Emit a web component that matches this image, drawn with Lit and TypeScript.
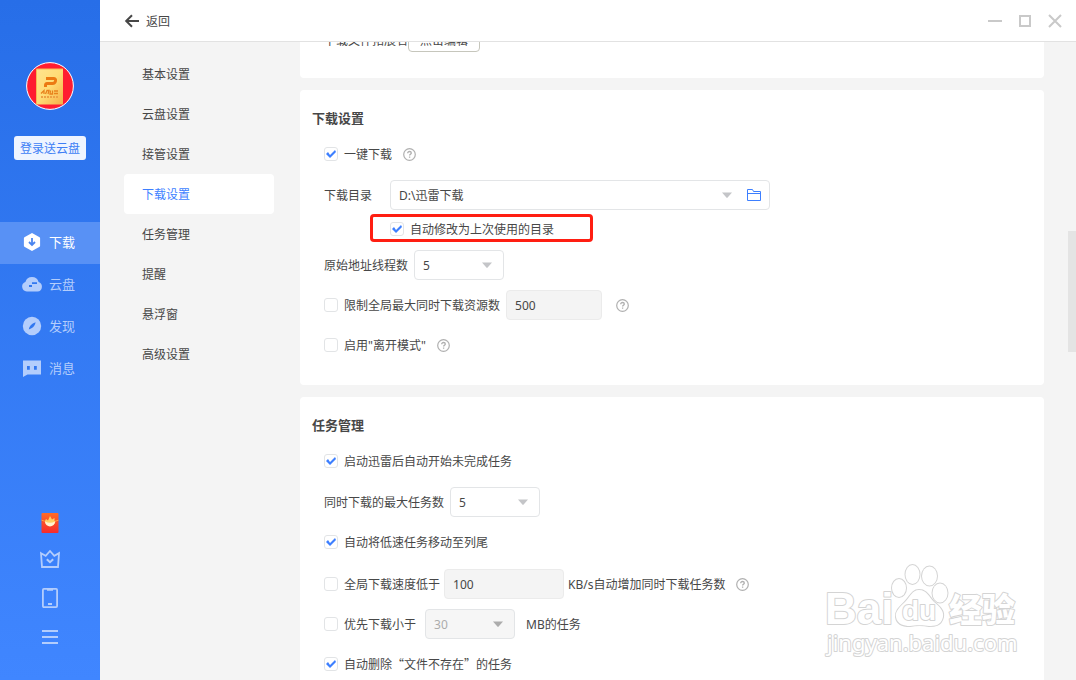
import { LitElement, html, css, svg, nothing } from "lit";
import { customElement, property, state } from "lit/decorators.js";
import { classMap } from "lit/directives/class-map.js";

const chevron = html`<svg class="caret" width="12" height="7" viewBox="0 0 12 7" aria-hidden="true"><path d="M1 0.5h10L6.6 5.6q-.6.6-1.2 0z" fill="currentColor"/></svg>`;

const sideIcons = {
  download: svg`<path d="M10 1l7.6 4.3a1 1 0 0 1 .5.9v7.6a1 1 0 0 1-.5.9L10 19l-7.6-4.3a1 1 0 0 1-.5-.9V6.2a1 1 0 0 1 .5-.9z" fill="currentColor"/><path d="M10 6v7M7 10l3 3 3-3" fill="none" stroke="#4a85ef" stroke-width="1.8"/>`,
  cloud: svg`<path d="M4.800 17.500A4.900 4.900 0 0 1 3.400 8 6.900 6.900 0 0 1 16.600 8 4.900 4.900 0 0 1 15.600 17.500z" fill="currentColor"/><path d="M10 10V8.200h5V10zM7 13v-2h3v2z" fill="#3177f0"/>`,
  explore: svg`<circle cx="10" cy="10" r="9.200" fill="currentColor"/><path d="M13.600 6.200c-.5 2.800-1.800 5.400-6.800 7.400.3-3.600 2.600-5.900 6.800-7.400z" fill="#3177f0"/>`,
  message: svg`<path d="M1 2.500h18v14H5.500L1 19z" fill="currentColor"/><path d="M5 8h2.800v3.800H5zM12 8h2.800v3.800H12z" fill="#3177f0"/>`,
};

@customElement("help-tip")
export class HelpTip extends LitElement {
  static styles = css`
    :host { display: inline-flex; margin-left: 11px; color: #b0b0b0; }
    .tip { display: flex; padding: 0; border: 0; background: none; color: inherit; cursor: help; }
  `;
  render() {
    return html`<button class="tip" type="button" aria-label="帮助">
      <svg width="13" height="13" viewBox="0 0 13 13" fill="none" stroke="currentColor">
        <circle cx="6.500" cy="6.500" r="5.800" stroke-width="1.200"/>
        <path d="M4.700 5.200c0-1.100.8-1.700 1.800-1.700s1.800.6 1.800 1.600c0 1.200-1.700 1.300-1.700 2.500M6.600 8.600v1.200" stroke-width="1.300"/>
      </svg>
    </button>`;
  }
}

@customElement("check-option")
export class CheckOption extends LitElement {
  @property() label = "";
  @property({ type: Boolean }) checked = false;
  static styles = css`
    :host { display: inline-flex; }
    .option { display: inline-flex; align-items: center; gap: 6px; white-space: nowrap; }
    .box {
      appearance: none; width: 14px; height: 14px; margin: 0; flex: none;
      border: 1px solid #e2e4e6; border-radius: 3px; background: #fff;
    }
    .box:checked::before {
      content: ""; display: block; width: 12px; height: 12px; background: #3d7fff;
      clip-path: polygon(1px 6px, 3px 4px, 5px 7px, 10px 2px, 11px 4px, 5px 10px);
    }
    .full { font-family: "Noto Sans CJK SC", sans-serif; }
  `;
  render() {
    const parts = this.label.split(/([“”])/);
    return html`<label class="option">
      <input class="box" type="checkbox" .checked=${this.checked} />
      <span>${parts.map((p) => (/[“”]/.test(p) ? html`<span class="full" lang="zh-CN">${p}</span>` : p))}</span>
    </label>`;
  }
}

@customElement("pick-list")
export class PickList extends LitElement {
  @property() label = "";
  @property() value = "";
  @property() suffix = "";
  @property({ type: Boolean }) disabled = false;
  static styles = css`
    :host { display: inline-flex; align-items: center; }
    .field { display: inline-flex; align-items: center; white-space: nowrap; gap: 6px; }
    .shell { display: grid; align-items: center; width: 90px; }
    .list {
      grid-area: 1 / 1; appearance: none; box-sizing: border-box; width: 100%; height: 30px;
      padding: 0 28px 0 8px; border: 1px solid #e3e5e7; border-radius: 4px;
      background: #fff; color: #474747; font: inherit;
    }
    .list:disabled { background: #f6f6f6; color: #acacac; opacity: 1; }
    .caret { grid-area: 1 / 1; justify-self: end; margin-right: 11px; color: #c4c5c8; pointer-events: none; }
    .list:disabled + .caret { color: #acacac; }
  `;
  render() {
    return html`<label class="field">
      ${this.label ? html`<span>${this.label}</span>` : nothing}
      <span class="shell">
        <select class="list" ?disabled=${this.disabled} aria-label=${this.label || this.suffix}>
          <option>${this.value}</option>
        </select>
        ${chevron}
      </span>
    </label>`;
  }
}

@customElement("side-bar")
export class SideBar extends LitElement {
  @state() private active = "download";
  private items: [keyof typeof sideIcons, string][] = [
    ["download", "下载"], ["cloud", "云盘"], ["explore", "发现"], ["message", "消息"],
  ];
  static styles = css`
    :host {
      display: flex; flex-direction: column; align-items: center; flex: none;
      box-sizing: border-box; width: 100px; padding: 62px 0 33px;
      background: linear-gradient(#276ee8, #4086ff); color: #b3cdfc;
    }
    button { border: 0; padding: 0; background: none; color: inherit; font: inherit; cursor: pointer; }
    svg { display: block; }
    .avatar { border-radius: 50%; }
    .login {
      width: 72px; height: 24px; margin: 26px 0 62px; border-radius: 3px;
      background: #eef4ff; color: #3d7ef5; white-space: nowrap;
    }
    .menu { width: 100%; font-size: 13px; }
    .entry {
      display: flex; align-items: center; gap: 7px; width: 100%; height: 42px; padding: 0 0 2px 22px;
    }
    .entry.on { background: #5891f5; color: #fff; }
    .tools { display: flex; flex-direction: column; margin-top: auto; }
    .tools button + button { margin-top: 19px; }
    .tools .gift + button { margin-top: 16px; }
  `;
  render() {
    return html`
      <button class="avatar" aria-label="头像">
        <svg width="48" height="48" viewBox="0 0 48 48">
          <defs><linearGradient id="gold" x2="1" y2="1"><stop stop-color="#ffe48f"/><stop offset="0.5" stop-color="#ffdc76"/><stop offset="1" stop-color="#f5ae45"/></linearGradient></defs>
          <circle cx="24" cy="24" r="23.400" fill="#ff1c30" stroke="#fff"/>
          <path d="M10 7h27v35.500H10z" fill="url(#gold)"/>
          <path d="M10.500 42.500V7H37" fill="none" stroke="#f7b851"/>
          <path d="M20 16.500h7.500q2.500 0 2 2.500t-3 2.500H21q-1.500 0-1.500 2V25" fill="none" stroke="#ec7a13" stroke-width="3"/>
          <path d="M15 31.500l3-3v3.500M19.500 32l1.500-3.500h2l-1 3.500M24.500 28.500l-.5 3.500h2.500v-3.500M28 29h4M28 31.500h4" fill="none" stroke="#e8821c" stroke-width="1.300"/>
          <path d="M15 35h17" stroke="#eda044" stroke-width="2" stroke-dasharray="2 1"/>
        </svg>
      </button>
      <button class="login">登录送云盘</button>
      <nav class="menu">
        ${this.items.map(([id, text]) => html`
          <button class=${classMap({ entry: true, on: this.active === id })} @click=${() => (this.active = id)}>
            <svg width="20" height="20" viewBox="0 0 20 20">${sideIcons[id]}</svg>${text}
          </button>`)}
      </nav>
      <div class="tools">
        <button class="gift" aria-label="福利">
          <svg width="20" height="20" viewBox="0 0 20 20">
            <defs><linearGradient id="red" x2="0" y2="1"><stop stop-color="#ff6b25"/><stop offset="1" stop-color="#f52b2c"/></linearGradient></defs>
            <rect x="1.500" y="0" width="17" height="20" rx="1" fill="url(#red)"/>
            <path d="M1.500 7.200q8.500 3.500 17 0" fill="none" stroke="#ff9d45"/>
            <path d="M5 8l1-2 2 1.500L10 3l2 3.500L14.500 5v3l1 .5a5.500 5.500 0 0 1-10.500 0z" fill="#ffd064"/>
            <path d="M5 8.500q5 2.500 10 0a5 5 0 0 1-10 0z" fill="#fff3d0"/>
          </svg>
        </button>
        <button aria-label="会员">
          <svg width="20" height="20" viewBox="0 0 20 20" fill="none" stroke="currentColor" stroke-width="1.800">
            <path d="M1 4.200l4.700 2.600L10 2l4.300 4.800L19 4.200 18 18H2z"/><path d="M6.800 10.200L10 13.200l3.200-3" stroke-width="2"/>
          </svg>
        </button>
        <button aria-label="手机">
          <svg width="20" height="20" viewBox="0 0 20 20" fill="none" stroke="currentColor" stroke-width="1.800">
            <rect x="2.900" y="0.900" width="14.200" height="18.200" rx="1"/><path d="M7 1.800h6M8 16h4" />
          </svg>
        </button>
        <button aria-label="菜单">
          <svg width="20" height="20" viewBox="0 0 20 20" stroke="currentColor" stroke-width="1.800"><path d="M2 4h16M2 10h16M2 16h16"/></svg>
        </button>
      </div>`;
  }
}

@customElement("app-root")
export class AppRoot extends LitElement {
  @state() private section = "下载设置";
  private sections = ["基本设置", "云盘设置", "接管设置", "下载设置", "任务管理", "提醒", "悬浮窗", "高级设置"];

  static styles = css`
    :host {
      display: flex; position: relative; height: 100vh; overflow: hidden;
      background: #f4f4f4; color: #474747;
      font: 12px/19px "Noto Sans", "Noto Sans CJK SC", sans-serif;
    }
    button { border: 0; padding: 0; background: none; color: inherit; font: inherit; cursor: pointer; }
    svg { display: block; }
    .main { display: flex; flex-direction: column; flex: 1; min-width: 0; }
    .top {
      display: flex; align-items: center; justify-content: space-between; flex: none;
      box-sizing: border-box; height: 42px; padding: 0 14px 0 24px;
      background: #fff; border-bottom: 1px solid #e2e2e2;
    }
    .back { display: flex; align-items: center; gap: 6px; padding-top: 1px; }
    .window { display: flex; gap: 16px; color: #c9c9c9; }
    .body { display: flex; flex: 1; min-height: 0; }
    .sections { display: flex; flex-direction: column; flex: none; width: 150px; padding: 12px 26px 0 24px; }
    .section { height: 40px; padding-left: 18px; border-radius: 4px; text-align: left; }
    .section.on { background: #fff; color: #3d7fff; }
    .pane { flex: 1; min-width: 0; overflow: hidden; }
    .cards { display: flex; flex-direction: column; gap: 12px; margin-top: -14px; }
    .card { padding: 16px 12px 25px; border-radius: 4px; background: #fff; }
    .card.partial { padding: 0 12px 26px; }
    .title { margin: 0 0 9px; font-size: 13px; line-height: 24px; font-weight: 700; }
    .row { display: flex; align-items: center; height: 30px; margin: 0 0 10px 12px; white-space: nowrap; }
    .row.lead { margin-bottom: 11px; }
    .row.loose { margin-bottom: 12px; }
    .row.short { height: 24px; margin-bottom: 0; }
    .row.last { margin-bottom: 0; }
    .row.path { margin-bottom: 4px; }
    .edit {
      box-sizing: border-box; width: 72px; height: 24px; border: 1px solid #c6c6bc; border-radius: 4px;
    }
    .folder {
      display: flex; align-items: center; box-sizing: border-box; width: 380px; height: 30px;
      margin-left: 18px; padding-right: 7px; border: 1px solid #e3e5e7; border-radius: 4px;
    }
    .pathlist {
      appearance: none; flex: 1; min-width: 0; height: 28px; padding: 0 8px; border: 0;
      background: none; color: inherit; font: inherit;
    }
    .caret { color: #c4c5c8; }
    .browse { margin-left: 13px; color: #3d7fff; }
    .marked {
      display: flex; align-items: center; box-sizing: border-box; width: 223px; height: 28px;
      margin: 0 0 8px 58px; padding: 2px 0 0 17px; border: 3px solid #ff1e12; border-radius: 4px;
    }
    .number {
      box-sizing: border-box; width: 96px; height: 30px; margin: 0 3px 0 6px; padding: 0 8px;
      border: 1px solid #ebebeb; border-radius: 4px; background: #f4f4f4; color: #474747; font: inherit;
    }
    .number.long { width: 120px; margin: 0 4px; }
    .size { margin: 0 11px 0 9px; }
    .track { display: grid; grid-template-rows: 189fr 121fr 328fr; flex: none; width: 8px; margin-left: 24px; }
    .thumb { grid-row: 2; background: #e4e4e4; }
    .mark { position: absolute; right: 52px; bottom: 14px; pointer-events: none; }
    .ink { fill: #fff; stroke: #d4d4d4; stroke-width: 2px; paint-order: stroke; stroke-linejoin: round; }
    .brand { font: 700 44px "Liberation Sans", sans-serif; }
    .du { font: 700 28px "Liberation Sans", sans-serif; }
    .han { font: 900 33px "Noto Sans CJK SC", sans-serif; }
    .site { font: 400 22px "Noto Sans", sans-serif; }
  `;

  render() {
    return html`
      <side-bar></side-bar>
      <div class="main">
        <header class="top">
          <button class="back">
            <svg width="16" height="14" viewBox="0 0 16 14" fill="none" stroke="currentColor" stroke-width="2"><path d="M15 7H2.500M8 1.200L2.200 7 8 12.800"/></svg>返回
          </button>
          <div class="window">
            <button aria-label="最小化"><svg width="14" height="14" viewBox="0 0 14 14" stroke="currentColor" stroke-width="2"><path d="M0 7h14"/></svg></button>
            <button aria-label="最大化"><svg width="14" height="14" viewBox="0 0 14 14" fill="none" stroke="currentColor" stroke-width="2"><path d="M2 2h10v10H2z"/></svg></button>
            <button aria-label="关闭"><svg width="14" height="14" viewBox="0 0 14 14" stroke="currentColor" stroke-width="2"><path d="M1 1l12 12M13 1L1 13"/></svg></button>
          </div>
        </header>
        <div class="body">
          <nav class="sections">
            ${this.sections.map((s) => html`
              <button class=${classMap({ section: true, on: s === this.section })} @click=${() => (this.section = s)}>${s}</button>`)}
          </nav>
          <main class="pane">
            <div class="cards">
              <section class="card partial">
                <div class="row short"><span>下载文件拓展名</span><button class="edit">点击编辑</button></div>
              </section>
              <section class="card">
                <h2 class="title">下载设置</h2>
                <div class="row lead"><check-option label="一键下载" checked></check-option><help-tip></help-tip></div>
                <div class="row path">
                  <label for="dir">下载目录</label>
                  <div class="folder">
                    <select class="pathlist" id="dir"><option>D:\\迅雷下载</option></select>
                    ${chevron}
                    <button class="browse" aria-label="浏览">
                      <svg width="16" height="14" viewBox="0 0 16 14" fill="none" stroke="currentColor"><path d="M1.500 12.500v-11h5l1 2h7v9zM1.500 5.500h13"/></svg>
                    </button>
                  </div>
                </div>
                <div class="marked"><check-option label="自动修改为上次使用的目录" checked></check-option></div>
                <div class="row"><pick-list label="原始地址线程数" value="5"></pick-list></div>
                <div class="row">
                  <check-option label="限制全局最大同时下载资源数"></check-option>
                  <input class="number" type="text" value="500" aria-label="最大资源数" /><help-tip></help-tip>
                </div>
                <div class="row last"><check-option label='启用"离开模式"'></check-option><help-tip></help-tip></div>
              </section>
              <section class="card">
                <h2 class="title">任务管理</h2>
                <div class="row lead"><check-option label="启动迅雷后自动开始未完成任务" checked></check-option></div>
                <div class="row"><pick-list label="同时下载的最大任务数" value="5"></pick-list></div>
                <div class="row loose"><check-option label="自动将低速任务移动至列尾" checked></check-option></div>
                <div class="row">
                  <check-option label="全局下载速度低于"></check-option>
                  <input class="number long" type="text" value="100" aria-label="全局下载速度" />
                  <span>KB/s自动增加同时下载任务数</span><help-tip></help-tip>
                </div>
                <div class="row">
                  <check-option label="优先下载小于"></check-option>
                  <pick-list class="size" value="30" suffix="MB的任务" disabled></pick-list>
                  <span>MB的任务</span>
                </div>
                <div class="row last"><check-option label="自动删除“文件不存在”的任务" checked></check-option></div>
              </section>
            </div>
          </main>
          <div class="track"><div class="thumb"></div></div>
        </div>
      </div>
      <svg class="mark" width="200" height="106" viewBox="0 0 200 106">
        <g class="ink">
          <text class="brand" x="1" y="64">Bai</text>
          <ellipse cx="75" cy="28" rx="7" ry="9"/>
          <ellipse cx="88.500" cy="14.500" rx="7" ry="9.500"/>
          <ellipse cx="105.500" cy="16" rx="7.500" ry="9.500"/>
          <ellipse cx="116" cy="33" rx="7.500" ry="9.500"/>
          <path d="M95 30c8 0 10 7 15 12 6 5 10 9 9 15-2 9-9 9-14 9-5-1-14-1-19 0-6 0-13-2-14-9-1-6 4-10 9-15 5-5 7-12 14-12z"/>
          <text class="du" x="78" y="60">du</text>
          <text class="han" x="125" y="62">经验</text>
          <text class="site" x="3" y="91">jingyan.baidu.com</text>
        </g>
      </svg>`;
  }
}
